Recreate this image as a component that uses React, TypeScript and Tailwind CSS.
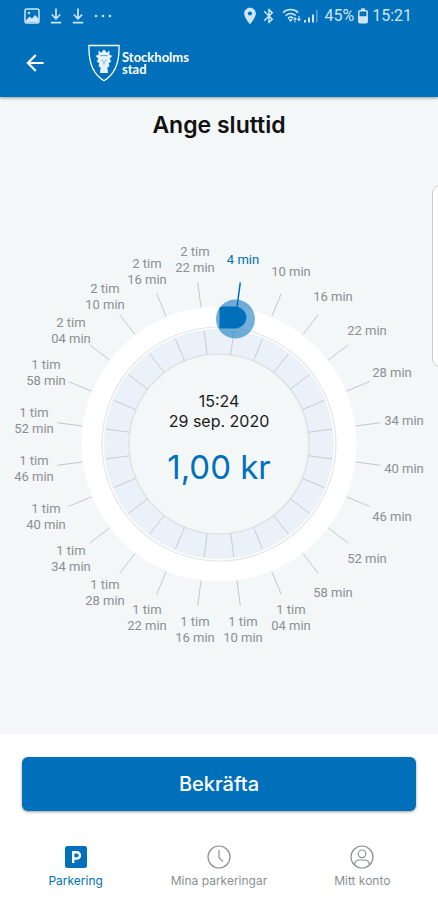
import React, { useState } from 'react';
import { MdArrowBack, MdBluetooth, MdLocationOn } from 'react-icons/md';
import { clsx } from 'clsx';

const STEPS = 24;
const SIZE = 416;
const CENTER = SIZE / 2;
const LABEL_RADIUS = 187;
const START_MINUTES = 15 * 60 + 20;

const stepAngle = (step: number) => ((step * 15 + 7.5) * Math.PI) / 180;

const point = (step: number, radius: number) => ({
  x: CENTER + radius * Math.sin(stepAngle(step)),
  y: CENTER - radius * Math.cos(stepAngle(step)),
});

const stepMinutes = (step: number) => 4 + step * 6;

const pad = (n: number) => String(n).padStart(2, '0');

const stepLabel = (step: number): string[] => {
  const total = stepMinutes(step);
  const hours = Math.floor(total / 60);
  if (!hours) return [`${total} min`];
  return [`${hours} tim`, `${pad(total % 60)} min`];
};

const PictureIcon = () => (
  <svg viewBox="0 0 16 16" className="size-4" fill="none" stroke="currentColor" strokeWidth="1.5">
    <rect x="1" y="1" width="14" height="14" rx="1.5" />
    <path d="M2 12.5l3.5-4 2.5 2 3-3.5 3.5 3.5V14H2z" fill="currentColor" stroke="none" />
    <circle cx="5" cy="5" r="1.2" fill="currentColor" stroke="none" />
  </svg>
);

const DownloadIcon = () => (
  <svg viewBox="0 0 12 16" className="h-4 w-3" fill="none" stroke="currentColor" strokeWidth="1.7">
    <path d="M6 0.5v10M1.8 6.5L6 10.8l4.2-4.3M0.8 14.6h10.4" />
  </svg>
);

const WifiIcon = () => (
  <svg viewBox="0 0 20 16" className="h-4 w-5" fill="none" stroke="currentColor" strokeWidth="1.5">
    <path d="M1 4.6C5.2 0.6 12 0.6 16.2 4.6M3.6 7.6C6.6 4.8 10.8 4.8 13.6 7.6M6 10.4C7.8 8.8 9.6 8.8 11.2 10.2" />
    <path d="M6.2 11.2h4.6L8.6 14z" fill="currentColor" stroke="none" />
    <path d="M11 11.5l2-2.500 2 2.500zM15 10.800h4l-2 2.800z" fill="currentColor" stroke="none" />
    <path d="M13 10.500V14.500M17 8V12" strokeWidth="1" />
  </svg>
);

const SignalIcon = () => (
  <svg viewBox="0 0 14 16" className="h-4 w-3.5" fill="currentColor">
    <path d="M0 12h2v2.5H0zM4 9.5h2v5H4zM8 6.5h2v8H8z" />
    <path d="M12 2h1.6v12.5H12z" opacity="0.4" />
  </svg>
);

const BatteryIcon = () => (
  <svg viewBox="0 0 10 16" className="h-4 w-2.5" fill="none" stroke="currentColor" strokeWidth="1.5">
    <path d="M3 1.4h4" strokeWidth="2" />
    <rect x="0.8" y="2.8" width="8.4" height="12" rx="1" />
    <path d="M1 8.2h8v6.4H1z" fill="currentColor" stroke="none" />
  </svg>
);

const CityCrest = () => (
  <svg viewBox="0 0 32 38" className="h-[38px] w-8" fill="none" stroke="currentColor">
    <path d="M1 1.5H31C31.600 16.500 27.400 30 16 36.800C4.600 30 .4 16.500 1 1.500z" strokeWidth="1.300" />
    <path d="M10.500 6.500l2.700 2.300L16 5.300l2.800 3.500 2.700-2.300v4.600l3 .7-2.800 3 1.500 2.600-2.400 1.700.6 3.200-2 1.400.6 5.300h-8l.6-5.300-2-1.400.6-3.200-2.400-1.700 1.500-2.600-2.800-3 3-.7z" fill="currentColor" stroke="none" opacity="0.900" />
    <path d="M12.300 11.600h7.400M13.500 16.300h1.500M17 16.300h1.500M16 17v3.400" stroke="#0070bb" strokeWidth="0.600" />
  </svg>
);

const ParkingIcon = () => (
  <svg viewBox="0 0 22 22" className="size-[22px]" fill="none">
    <rect width="22" height="22" rx="2.5" fill="#0070bb" />
    <path d="M8.200 17V6.300h3.600a3.100 3.100 0 0 1 0 6.200H8.200" stroke="#fff" strokeWidth="2.400" />
  </svg>
);

const ClockIcon = () => (
  <svg viewBox="0 0 24 24" className="size-6" fill="none" stroke="currentColor" strokeWidth="1.2">
    <circle cx="12" cy="12" r="11" />
    <path d="M12 5v7.500l4 4.200" />
  </svg>
);

const AccountIcon = () => (
  <svg viewBox="0 0 24 24" className="size-6" fill="none" stroke="currentColor" strokeWidth="1.2">
    <circle cx="12" cy="12" r="11" />
    <circle cx="12" cy="8.800" r="3.800" />
    <path d="M4.500 20c.3-3.600 2.600-5 5-5h5c2.400 0 4.700 1.400 5 5" />
  </svg>
);

const StatusBar = () => (
  <div className="flex h-8 items-center justify-between pl-6 pr-[26px] text-[#cfe5f5]">
    <div className="flex items-center gap-2.5">
      <PictureIcon />
      <DownloadIcon />
      <DownloadIcon />
      <svg viewBox="0 0 18 4" className="h-1 w-[18px]" fill="currentColor">
        <circle cx="2" cy="2" r="1.300" />
        <circle cx="9" cy="2" r="1.300" />
        <circle cx="16" cy="2" r="1.300" />
      </svg>
    </div>
    <div className="flex items-center font-[Roboto,sans-serif] text-base">
      <MdLocationOn className="size-5" />
      <MdBluetooth className="mr-1 size-[18px]" />
      <WifiIcon />
      <span className="ml-0.5 mr-1.5">
        <SignalIcon />
      </span>
      <span className="mr-1">45%</span>
      <BatteryIcon />
      <span className="ml-1">15:21</span>
    </div>
  </div>
);

interface TimeDialProps {
  step: number;
  onChange: (step: number) => void;
}

const TimeDial: React.FC<TimeDialProps> = ({ step, onChange }) => {
  const end = START_MINUTES + stepMinutes(step);
  const price = (stepMinutes(step) / 4).toFixed(2).replace('.', ',');
  const handle = point(step, 126);

  return (
    <div className="relative size-[416px] shrink-0">
      <svg viewBox={`0 0 ${SIZE} ${SIZE}`} className="size-full" fill="none">
        {/* Track */}
        <circle cx={CENTER} cy={CENTER} r="137.500" fill="#fff" />
        <circle cx={CENTER} cy={CENTER} r="117" stroke="#e3e5e8" strokeWidth="1.200" />
        <circle cx={CENTER} cy={CENTER} r="115" fill="#ebf1f8" />
        <circle cx={CENTER} cy={CENTER} r="90" fill="#f3f7f8" stroke="#dfe2e6" strokeWidth="1.500" />
        {Array.from({ length: STEPS }, (_, i) => {
          const a = point(i, 90);
          const b = point(i, 114);
          return <line key={i} x1={a.x} y1={a.y} x2={b.x} y2={b.y} stroke="#c8ccd1" />;
        })}

        {/* Handle */}
        <circle cx={handle.x} cy={handle.y} r="19.500" fill="#0070bb" fillOpacity="0.550" />
        <g transform={`translate(${handle.x} ${handle.y})`}>
          <path d="M-16-11.500L-13-12.500H-1C6-12.500 11-7 11-1.500S6 9.500-1 9.500H-16z" fill="#0070bb" />
        </g>

        {Array.from({ length: STEPS }, (_, i) => {
          const a = point(i, 138);
          const b = point(i, 163);
          const active = i === step;
          return (
            <line
              key={i}
              x1={a.x}
              y1={a.y}
              x2={b.x}
              y2={b.y}
              stroke={active ? '#0070bb' : '#c3c7ca'}
              strokeWidth={active ? 1.5 : 1}
            />
          );
        })}
      </svg>

      {/* Step labels */}
      {Array.from({ length: STEPS }, (_, i) => {
        const { x, y } = point(i, LABEL_RADIUS);
        return (
          <span
            key={i}
            className={clsx(
              'absolute -translate-x-1/2 -translate-y-1/2 whitespace-nowrap pt-0.5 text-center font-[Roboto,sans-serif] text-[13px] leading-4',
              i === step ? 'text-[#0070bb]' : 'text-[#8b8f92]'
            )}
            style={{ left: Math.round(x), top: Math.round(y) }}
          >
            {stepLabel(i).map((line) => (
              <span key={line} className="block">{line}</span>
            ))}
          </span>
        );
      })}

      <div className="absolute inset-0 flex flex-col items-center justify-center pb-2.5 text-[#1c1c1c]">
        <span className="text-base leading-5">{pad(Math.floor(end / 60))}:{pad(end % 60)}</span>
        <span className="text-base leading-5">29 sep. 2020</span>
        <span className="mt-4 text-[33px] leading-10 text-[#0070bb]">{price} kr</span>
      </div>

      <input
        id="end-time"
        type="range"
        min={0}
        max={STEPS - 1}
        value={step}
        onChange={(e) => onChange(Number(e.target.value))}
        className="sr-only"
      />
    </div>
  );
};

const tabs = [
  { name: 'Parkering', icon: <ParkingIcon /> },
  { name: 'Mina parkeringar', icon: <ClockIcon /> },
  { name: 'Mitt konto', icon: <AccountIcon /> },
];

export default function App() {
  const [step, setStep] = useState(0);

  return (
    <div className="relative flex min-h-screen flex-col overflow-hidden bg-white font-[Inter,sans-serif]">
      <header className="z-10 bg-[#0070bb] text-white shadow-[0_1px_3px_rgba(0,0,0,0.4)]">
        <StatusBar />
        <div className="flex h-[65px] items-center pb-1 pl-[22px]">
          <button type="button" aria-label="Tillbaka">
            <MdArrowBack className="size-[26px]" />
          </button>
          <a href="#" className="ml-10 flex items-center gap-0.5">
            <CityCrest />
            <span className="flex flex-col font-[Lato,sans-serif] text-[13px] font-bold leading-3">
              <span>Stockholms</span>
              <span>stad</span>
            </span>
          </a>
        </div>
      </header>

      <main className="flex flex-1 flex-col items-center bg-[#f3f7f8] pt-3">
        <h1 className="text-[23px] font-semibold leading-8 text-[#111]">
          <label htmlFor="end-time">Ange sluttid</label>
        </h1>
        <div className="flex flex-1 items-center pt-3">
          <TimeDial step={step} onChange={setStep} />
        </div>
      </main>

      {/* Edge panel */}
      <div className="absolute -right-2 top-[185px] h-[182px] w-3.5 rounded-l-lg border border-[#c9cccf] bg-white" />

      <footer className="px-[22px] pt-[22px]">
        <button
          type="button"
          className="h-[54px] w-full rounded-md bg-[#0070bb] text-xl font-medium text-white shadow-[0_1px_3px_rgba(0,0,0,0.4)]"
        >
          Bekräfta
        </button>
      </footer>

      <nav className="grid grid-cols-3 px-1 pb-[11px] pt-[34px] text-xs leading-4">
        {tabs.map((tab, i) => (
          <a
            key={tab.name}
            href="#"
            className={clsx('flex flex-col items-center gap-1', i === 0 ? 'text-[#0070bb]' : 'text-[#8b8f92]')}
          >
            <span className="flex size-6 items-center justify-center">{tab.icon}</span>
            {tab.name}
          </a>
        ))}
      </nav>
    </div>
  );
}
